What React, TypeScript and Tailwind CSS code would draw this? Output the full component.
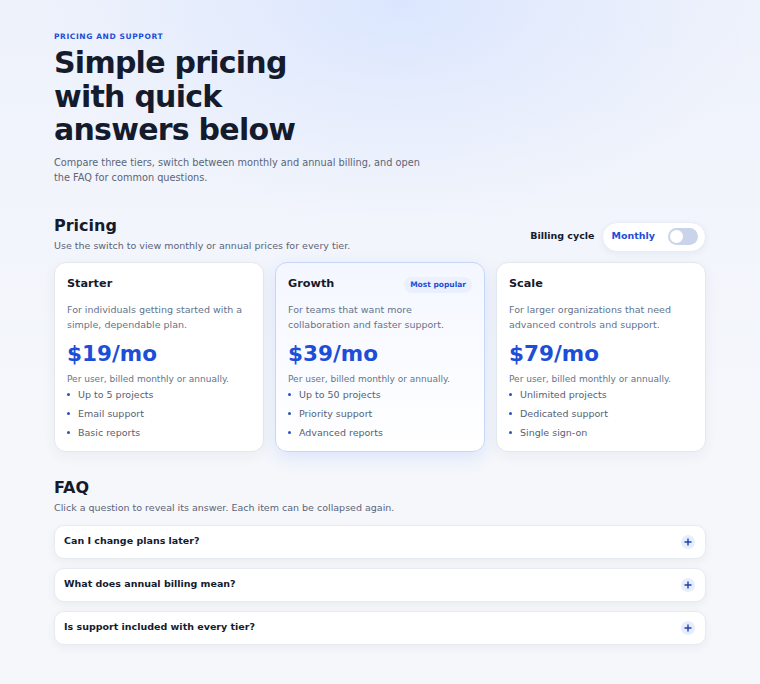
import React from "react";

const tiers = [
  {
    name: "Starter",
    desc: "For individuals getting started with a simple, dependable plan.",
    price: "$19/mo",
    features: ["Up to 5 projects", "Email support", "Basic reports"],
    popular: false,
  },
  {
    name: "Growth",
    desc: "For teams that want more collaboration and faster support.",
    price: "$39/mo",
    features: ["Up to 50 projects", "Priority support", "Advanced reports"],
    popular: true,
  },
  {
    name: "Scale",
    desc: "For larger organizations that need advanced controls and support.",
    price: "$79/mo",
    features: ["Unlimited projects", "Dedicated support", "Single sign-on"],
    popular: false,
  },
];

const faqs = [
  "Can I change plans later?",
  "What does annual billing mean?",
  "Is support included with every tier?",
];

export default function App() {
  return (
    <div
      className="min-h-[684px] w-full bg-[#f4f6fb] text-[#0f172a]"
      style={{
        fontFamily: '"DejaVu Sans", Verdana, sans-serif',
        backgroundImage:
          "radial-gradient(ellipse 360px 220px at 400px 0px, #dbe6fe 0%, rgba(219,230,254,0.5) 45%, rgba(244,246,251,0) 100%), linear-gradient(180deg, #eef2fb 0%, #f5f7fb 60%, #f6f7fb 100%)",
      }}
    >
      <div className="mx-auto w-[652px] pt-[32px] pb-[38px]">
        <div className="text-[7.5px] font-bold uppercase tracking-[0.08em] text-[#1d4ed8] leading-[9px]">
          Pricing and Support
        </div>
        <h1 className="mt-[5px] max-w-[290px] text-[30px] font-bold leading-[33.5px] tracking-tight text-[#141b2d]">
          Simple pricing with quick answers below
        </h1>
        <p className="mt-[8px] max-w-[384px] text-[9.75px] leading-[15px] text-[#5b6478]">
          Compare three tiers, switch between monthly and annual billing, and open the FAQ for common questions.
        </p>

        <div className="mt-[31px] flex items-end justify-between">
          <div>
            <h2 className="text-[16px] font-bold leading-[20px] text-[#141b2d]">Pricing</h2>
            <p className="mt-[3px] text-[9.5px] leading-[13px] text-[#5b6478]">
              Use the switch to view monthly or annual prices for every tier.
            </p>
          </div>
          <div className="flex items-center gap-[7px]">
            <span className="text-[9.5px] font-bold text-[#141b2d]">Billing cycle</span>
            <div className="flex h-[30px] items-center gap-[13px] rounded-full border border-[#e8ecf4] bg-white pl-[9px] pr-[7px] shadow-[0_2px_6px_rgba(30,58,138,0.06)]">
              <span className="text-[9.5px] font-bold text-[#1d4ed8]">Monthly</span>
              <div className="relative h-[17px] w-[30px] rounded-full bg-[#c9d4ea]">
                <div className="absolute left-[1px] top-[1px] h-[15px] w-[15px] rounded-full border border-[#cbd3e1] bg-white" />
              </div>
            </div>
          </div>
        </div>

        <div className="mt-[10px] grid grid-cols-3 gap-[11px]">
          {tiers.map((t) => (
            <div
              key={t.name}
              className={
                t.popular
                  ? "h-[190px] rounded-[12px] border border-[#c7d6f7] bg-gradient-to-b from-[#f4f7ff] to-white px-[12px] pt-[13px] shadow-[0_6px_18px_rgba(37,99,235,0.12)]"
                  : "h-[190px] rounded-[12px] border border-[#e3e7ef] bg-white px-[12px] pt-[13px] shadow-[0_4px_14px_rgba(30,41,59,0.05)]"
              }
            >
              <div className="flex h-[18px] items-center justify-between">
                <span className="text-[11.25px] font-bold text-[#141b2d]">{t.name}</span>
                {t.popular && (
                  <span className="rounded-full bg-[#eaf0fd] px-[6px] py-[3px] text-[7.5px] font-bold leading-[10px] text-[#1d4ed8]">
                    Most popular
                  </span>
                )}
              </div>
              <p className="mt-[8px] text-[9.5px] leading-[15px] text-[#64748b]">{t.desc}</p>
              <div className="mt-[7px] text-[21.5px] font-bold leading-[30px] text-[#1d4ed8]">{t.price}</div>
              <p className="mt-[4px] text-[9px] leading-[13px] text-[#64748b]">
                Per user, billed monthly or annually.
              </p>
              <ul className="mt-[2px] flex flex-col gap-[5px]">
                {t.features.map((f) => (
                  <li key={f} className="flex items-center gap-[8px] text-[9.5px] leading-[14px] text-[#566176]">
                    <span className="h-[3px] w-[3px] rounded-full bg-[#2d4fb8]" />
                    {f}
                  </li>
                ))}
              </ul>
            </div>
          ))}
        </div>

        <h2 className="mt-[26px] text-[16px] font-bold leading-[20px] text-[#141b2d]">FAQ</h2>
        <p className="mt-[3px] text-[9.5px] leading-[13px] text-[#5b6478]">
          Click a question to reveal its answer. Each item can be collapsed again.
        </p>
        <div className="mt-[11px] flex flex-col gap-[9px]">
          {faqs.map((q) => (
            <div
              key={q}
              className="flex h-[34px] items-center justify-between rounded-[10px] border border-[#e6eaf1] bg-white pl-[9px] pr-[10px] shadow-[0_3px_10px_rgba(30,41,59,0.05)]"
            >
              <span className="text-[9.5px] font-bold text-[#141b2d]">{q}</span>
              <span className="flex h-[14px] w-[14px] items-center justify-center rounded-full bg-[#e6edfc]">
                <svg width="8" height="8" viewBox="0 0 8 8">
                  <path d="M4 0.5v7M0.5 4h7" stroke="#1e40af" strokeWidth="1.4" />
                </svg>
              </span>
            </div>
          ))}
        </div>
      </div>
    </div>
  );
}
